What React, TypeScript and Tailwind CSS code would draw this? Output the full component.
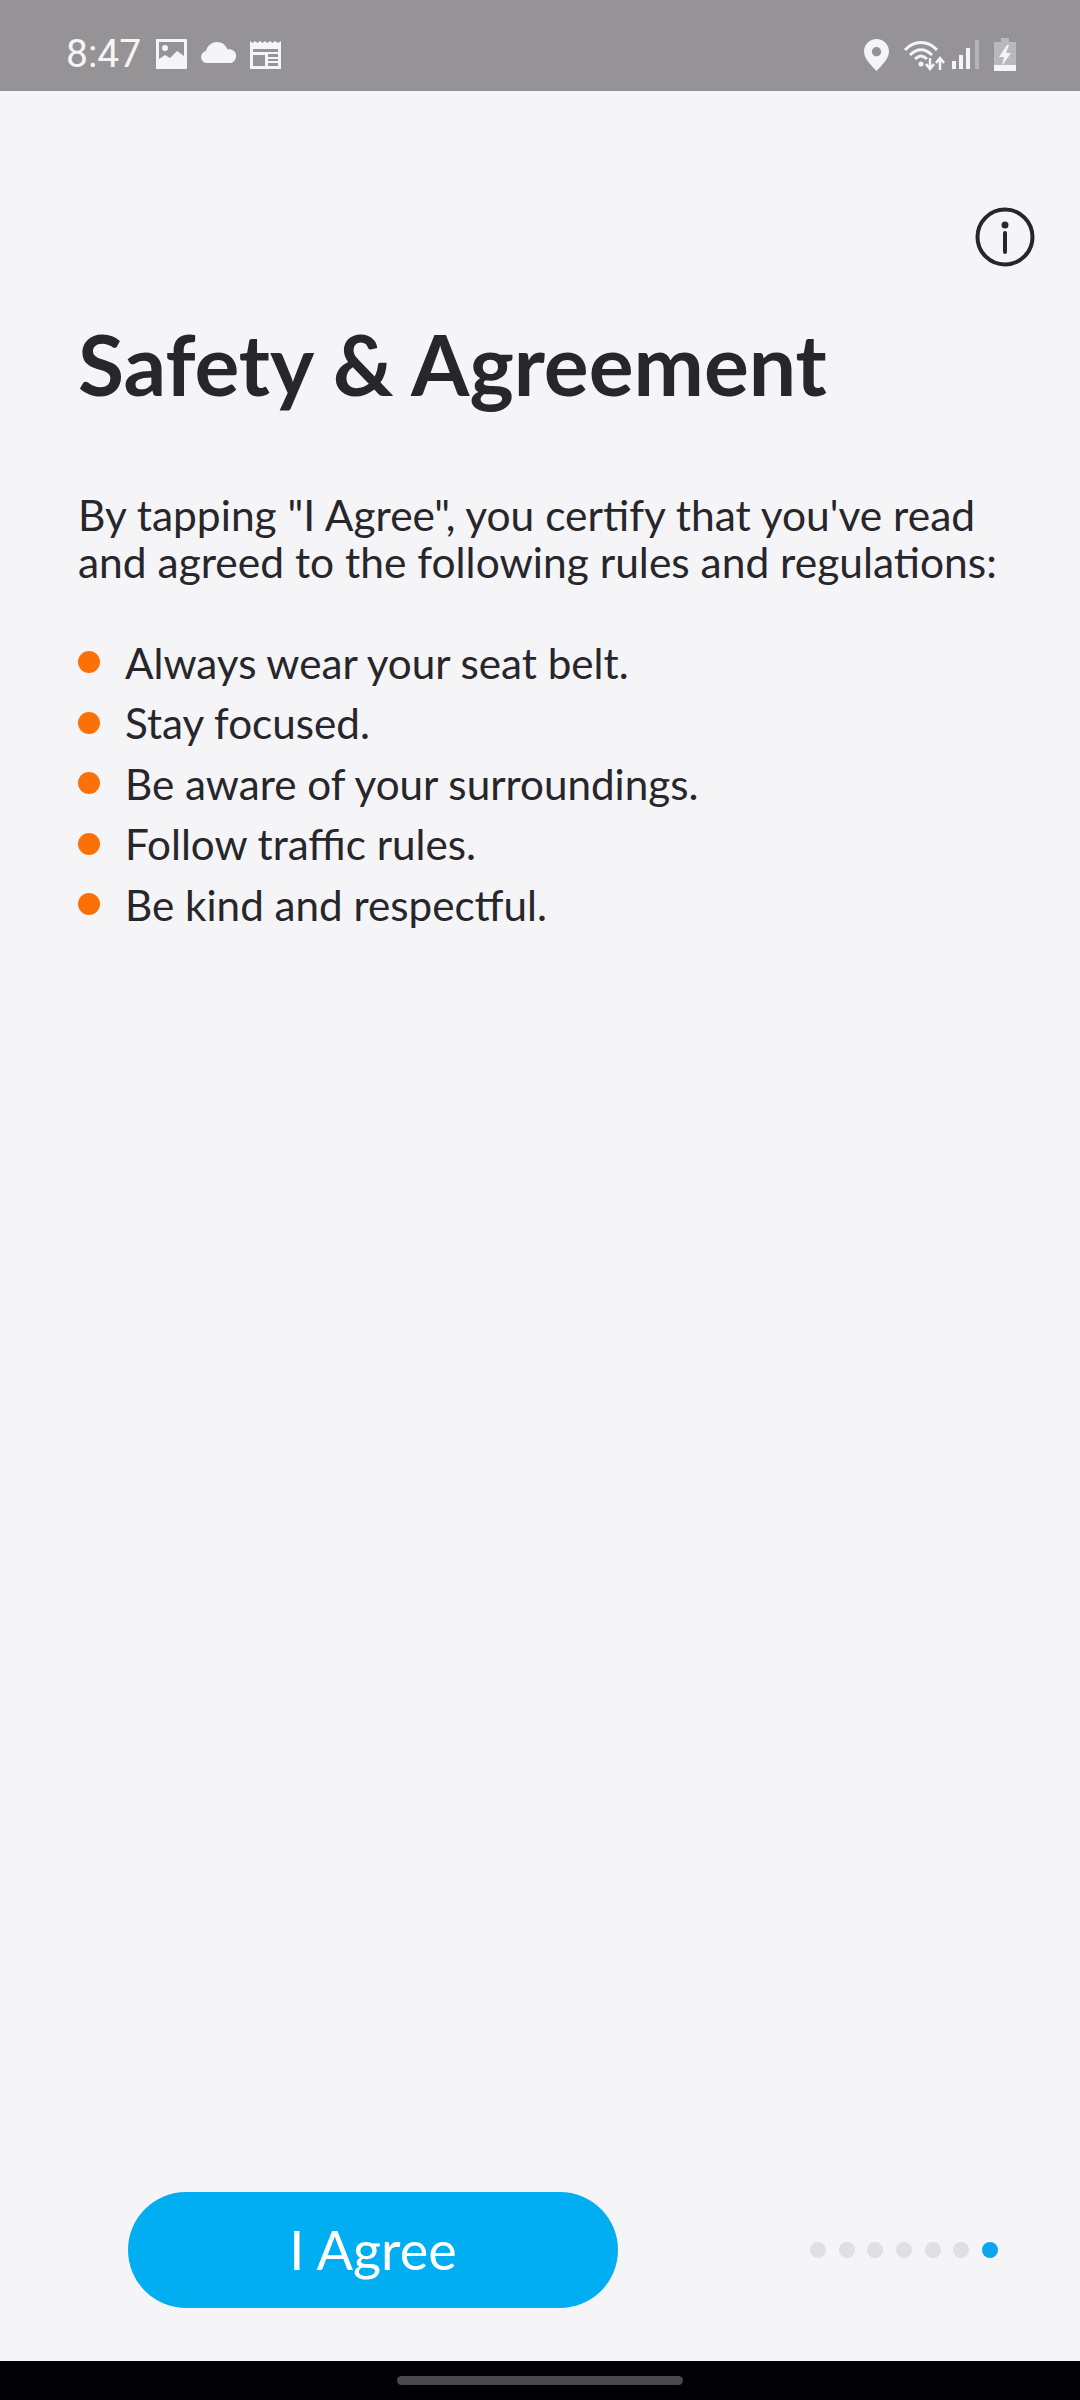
import React from 'react';

const rules = [
  'Always wear your seat belt.',
  'Stay focused.',
  'Be aware of your surroundings.',
  'Follow traffic rules.',
  'Be kind and respectful.',
];

const StatusBar: React.FC = () => (
  <div className="h-[91px] shrink-0 bg-[#959396] flex items-center justify-between pt-[18px] pl-[66px] pr-[64px] text-[#f5f4f6]">
    <div className="flex items-center">
      <span className="text-[39px] leading-none font-normal font-['Roboto',sans-serif] w-[90px] mt-[-1px]">8:47</span>
      <svg width="31" height="30" viewBox="0 0 31 30" fill="currentColor" className="mt-[-1px]">
        <path fillRule="evenodd" d="M1 0h29a1 1 0 0 1 1 1v28a1 1 0 0 1-1 1H1a1 1 0 0 1-1-1V1a1 1 0 0 1 1-1zm2 3v17l6-4 5 3 7-7 7 5V3z" />
        <circle cx="9" cy="9" r="3" />
      </svg>
      <svg width="36" height="21" viewBox="0 0 36 21" fill="currentColor" className="ml-[13px] mt-[-4px]">
        <path d="M7 21a6 6 0 0 1-1-11.9C7 4 11.500 0 17 0c5 0 9 3 10.500 7.500A6.800 6.800 0 0 1 36 15.500C35 19 33 21 30 21z" />
      </svg>
      <svg width="31" height="28" viewBox="0 0 31 28" fill="currentColor" className="ml-[14px]">
        <path fillRule="evenodd" d="M0 0l2.500 2L5 0l2.500 2L10 0l2.500 2L15 0l2.500 2L20 0l2.500 2L25 0l3 2 3-2v28H0zM3 8v17h12V14H3zm0-1v4h25V8H3zm15 6v3h10v-3zm0 5v2h10v-2zm0 4v3h10v-3z" />
      </svg>
    </div>
    <div className="flex items-center">
      <svg width="25" height="32" viewBox="0 0 25 32" fill="currentColor">
        <path fillRule="evenodd" d="M12.500 0A12.500 12.500 0 0 1 25 12.500C25 20 17 27 12.500 32 8 27 0 20 0 12.500A12.500 12.500 0 0 1 12.500 0zm0 8a4.700 4.700 0 1 0 0 9.400 4.700 4.700 0 0 0 0-9.400z" />
      </svg>
      <svg width="42" height="32" viewBox="0 0 42 32" fill="none" stroke="currentColor" strokeWidth="3" className="ml-[14px]">
        <path d="M2 11C11 1 25 1 34 11" />
        <path d="M7 16c7-7 15-7 22 0" />
        <path d="M12 20c4-4 8-4 12 0" />
        <circle cx="18" cy="25" r="2.500" fill="currentColor" stroke="none" />
        <path d="M27 19v10m-4-4 4 5 4-5" strokeWidth="2.500" />
        <path d="M37 31V20m-4 4 4-5 4 5" strokeWidth="2.500" />
      </svg>
      <svg width="28" height="30" viewBox="0 0 28 30" className="ml-[7px] mt-[1px]">
        <rect x="0" y="21" width="4" height="8" fill="currentColor" />
        <rect x="7" y="15" width="4" height="14" fill="currentColor" />
        <rect x="14" y="8" width="4" height="21" fill="currentColor" />
        <rect x="23" y="0" width="4" height="29" fill="#b4b3b5" />
      </svg>
      <svg width="22" height="33" viewBox="0 0 22 33" className="ml-[14px]">
        <path d="M7 0h8v4h7v29H0V4h7z" fill="#b9b8ba" />
        <rect x="0" y="27" width="22" height="6" fill="currentColor" />
        <path d="M13 7 5 19h5l-2 9 9-13h-5l3-8z" fill="currentColor" />
      </svg>
    </div>
  </div>
);

const Pager: React.FC = () => (
  <div className="flex items-center gap-[12.700px]">
    {[0, 1, 2, 3, 4, 5].map((i) => (
      <span key={i} className="w-4 h-4 rounded-full bg-[#e0e0e2]" />
    ))}
    <span className="w-4 h-4 rounded-full bg-[#0ba6ec]" />
  </div>
);

export default function App() {
  return (
    <div className="w-[1080px] h-[2400px] flex flex-col bg-[#f5f4f6] font-['Lato',sans-serif] text-[#27262b] overflow-hidden">
      <StatusBar />
      <main className="flex-1 flex flex-col">
        <div className="flex justify-end pt-[116px] pr-[45px]">
          <svg width="60" height="60" viewBox="0 0 60 60" fill="none" stroke="#27262b">
            <circle cx="30" cy="30" r="27.500" strokeWidth="4" />
            <circle cx="30" cy="18" r="3.500" fill="#27262b" stroke="none" />
            <path d="M30 26v19" strokeWidth="4" strokeLinecap="round" />
          </svg>
        </div>
        <div className="px-[78px]">
          <h1 className="mt-[52px] text-[84px] leading-[90px] font-bold">Safety &amp; Agreement</h1>
          <p className="mt-[82px] text-[42.500px] leading-[47px] whitespace-nowrap">
            By tapping "I Agree", you certify that you've read
            <br />
            and agreed to the following rules and regulations:
          </p>
          <ul className="mt-[47px] flex flex-col">
            {rules.map((rule) => (
              <li key={rule} className="h-[60.500px] flex items-center text-[42.200px]">
                <span className="w-[22px] h-[22px] rounded-full bg-[#fb7108] mr-[25px]" />
                {rule}
              </li>
            ))}
          </ul>
        </div>
        <div className="mt-auto h-[169px] flex items-start pl-[128px] pr-[82px] justify-between">
          <button className="w-[490px] h-[116px] rounded-[58px] bg-[#02aef2] text-white text-[54px] leading-none">
            I Agree
          </button>
          <div className="h-[116px] flex items-center">
            <Pager />
          </div>
        </div>
      </main>
      <div className="h-[39px] shrink-0 bg-[#020103] flex justify-center pt-[15px]">
        <div className="w-[286px] h-[9px] rounded-full bg-[#49484c]" />
      </div>
    </div>
  );
}
